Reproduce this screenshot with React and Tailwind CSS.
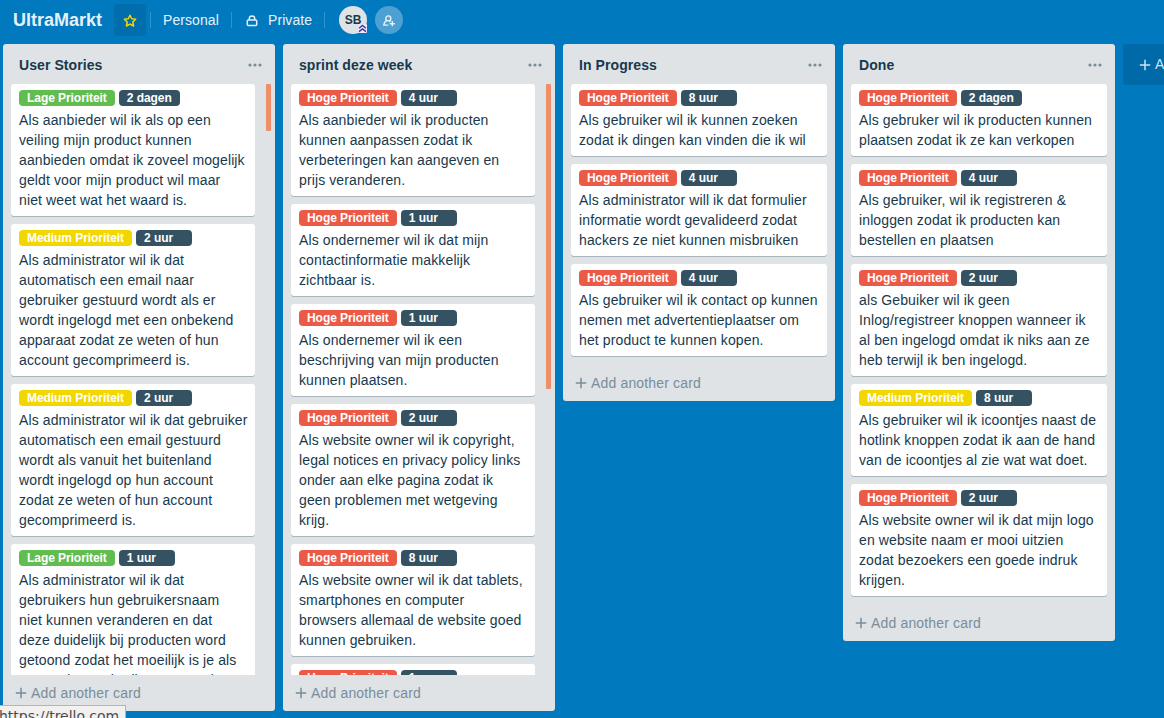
import React from "react";

const LOW = ["Lage Prioriteit", "bg-[#61bd4f]"];
const MEDIUM = ["Medium Prioriteit", "bg-[#f2d600]"];
const HIGH = ["Hoge Prioriteit", "bg-[#eb5a46]"];

const lists = [
  {
    title: "User Stories",
    thumb: "h-[47px]",
    cards: [
      [LOW, "2 dagen", ["Als aanbieder wil ik als op een", "veiling mijn product kunnen", "aanbieden omdat ik zoveel mogelijk", "geldt voor mijn product wil maar", "niet weet wat het waard is."]],
      [MEDIUM, "2 uur", ["Als administrator wil ik dat", "automatisch een email naar", "gebruiker gestuurd wordt als er", "wordt ingelogd met een onbekend", "apparaat zodat ze weten of hun", "account gecomprimeerd is."]],
      [MEDIUM, "2 uur", ["Als administrator wil ik dat gebruiker", "automatisch een email gestuurd", "wordt als vanuit het buitenland", "wordt ingelogd op hun account", "zodat ze weten of hun account", "gecomprimeerd is."]],
      [LOW, "1 uur", ["Als administrator wil ik dat", "gebruikers hun gebruikersnaam", "niet kunnen veranderen en dat", "deze duidelijk bij producten word", "getoond zodat het moeilijk is je als", "een andere gebruiker voor te doen"]],
    ],
  },
  {
    title: "sprint deze week",
    thumb: "h-[305px]",
    cards: [
      [HIGH, "4 uur", ["Als aanbieder wil ik producten", "kunnen aanpassen zodat ik", "verbeteringen kan aangeven en", "prijs veranderen."]],
      [HIGH, "1 uur", ["Als ondernemer wil ik dat mijn", "contactinformatie makkelijk", "zichtbaar is."]],
      [HIGH, "1 uur", ["Als ondernemer wil ik een", "beschrijving van mijn producten", "kunnen plaatsen."]],
      [HIGH, "2 uur", ["Als website owner wil ik copyright,", "legal notices en privacy policy links", "onder aan elke pagina zodat ik", "geen problemen met wetgeving", "krijg."]],
      [HIGH, "8 uur", ["Als website owner wil ik dat tablets,", "smartphones en computer", "browsers allemaal de website goed", "kunnen gebruiken."]],
      [HIGH, "1 uur", []],
    ],
  },
  {
    title: "In Progress",
    cards: [
      [HIGH, "8 uur", ["Als gebruiker wil ik kunnen zoeken", "zodat ik dingen kan vinden die ik wil"]],
      [HIGH, "4 uur", ["Als administrator will ik dat formulier", "informatie wordt gevalideerd zodat", "hackers ze niet kunnen misbruiken"]],
      [HIGH, "4 uur", ["Als gebruiker wil ik contact op kunnen", "nemen met advertentieplaatser om", "het product te kunnen kopen."]],
    ],
  },
  {
    title: "Done",
    cards: [
      [HIGH, "2 dagen", ["Als gebruker wil ik producten kunnen", "plaatsen zodat ik ze kan verkopen"]],
      [HIGH, "4 uur", ["Als gebruiker, wil ik registreren &", "inloggen zodat ik producten kan", "bestellen en plaatsen"]],
      [HIGH, "2 uur", ["als Gebuiker wil ik geen", "Inlog/registreer knoppen wanneer ik", "al ben ingelogd omdat ik niks aan ze", "heb terwijl ik ben ingelogd."]],
      [MEDIUM, "8 uur", ["Als gebruiker wil ik icoontjes naast de", "hotlink knoppen zodat ik aan de hand", "van de icoontjes al zie wat wat doet."]],
      [HIGH, "2 uur", ["Als website owner wil ik dat mijn logo", "en website naam er mooi uitzien", "zodat bezoekers een goede indruk", "krijgen."]],
    ],
  },
];

function Plus({ className = "" }) {
  return (
    <svg className={className} width="12" height="12" viewBox="0 0 12 12" fill="none" stroke="currentColor" strokeWidth="1.5">
      <path d="M6 .8v10.4M.8 6h10.4" />
    </svg>
  );
}

function Label({ color, children }) {
  return (
    <span className={`h-4 min-w-14 shrink-0 rounded-[4px] px-2 text-[12px] leading-4 font-bold tracking-[-0.06px] text-white ${color}`}>
      {children}
    </span>
  );
}

function Card({ card: [priority, time, lines] }) {
  return (
    <article className="shrink-0 rounded-[3px] bg-white px-2 py-1.5 shadow-[0_1px_0_rgba(9,45,66,0.25)]">
      <div className="mb-1 flex gap-1">
        <Label color={priority[1]}>{priority[0]}</Label>
        <Label color="bg-[#355263]">{time}</Label>
      </div>
      <p className="text-[14px] leading-5 tracking-[0.115px] whitespace-nowrap text-[#17394d]">
        {lines.map((line) => (
          <span key={line} className="block">{line}</span>
        ))}
      </p>
    </article>
  );
}

function List({ list }) {
  return (
    <section className="flex max-h-full w-[272px] shrink-0 flex-col rounded-[3px] bg-[#dfe3e6]">
      <header className="flex h-10 shrink-0 items-center justify-between pt-0.5 pr-[13px] pl-4">
        <h2 className="text-[14px] leading-5 font-bold tracking-[0.08px] text-[#17394d]">{list.title}</h2>
        <svg width="14" height="4" viewBox="0 0 14 4" className="mb-px fill-[#798d99]">
          <circle cx="2" cy="2" r="1.6" />
          <circle cx="7" cy="2" r="1.6" />
          <circle cx="12" cy="2" r="1.6" />
        </svg>
      </header>
      <div className="flex min-h-0 overflow-hidden pr-1 pl-2">
        <div className={`flex min-w-0 flex-1 flex-col gap-2 pb-[9px] ${list.thumb ? "" : "mr-1"}`}>
          {list.cards.map((card, i) => (
            <Card key={i} card={card} />
          ))}
        </div>
        {list.thumb && <div className={`ml-[11px] w-[5px] shrink-0 rounded-[1px] bg-[#ef8f68] ${list.thumb}`} />}
      </div>
      <button className="flex h-9 shrink-0 items-center gap-1 pl-3 text-[14px] leading-5 tracking-[0.16px] text-[#798d99]">
        <Plus />
        Add another card
      </button>
    </section>
  );
}

export default function App() {
  return (
    <div className="relative flex h-[718px] w-[1164px] flex-col overflow-hidden bg-[#0079bf] font-['Liberation_Sans',Arial,sans-serif]">
      <nav className="flex h-10 shrink-0 items-center pl-[13px] text-[14px] text-[#e5f1f8]">
        <h1 className="w-[101px] text-[18px] leading-8 font-bold">UltraMarkt</h1>
        <div className="flex h-8 w-8 items-center justify-center rounded-[3px] bg-[#006ead] text-[#f2d600]">
          <svg width="14" height="14" viewBox="0 0 14 14" fill="none" stroke="currentColor" strokeWidth="1.5" strokeLinejoin="round" className="mt-0.5">
            <path d="M7 1.2l1.7 3.6 4 .5-2.9 2.7.8 4L7 10.1 3.4 12l.8-4L1.3 5.3l4-.5z" />
          </svg>
        </div>
        <div className="ml-1 h-4 w-px bg-[#3394cc]" />
        <span className="ml-3 w-[68px] tracking-[0.08px]">Personal</span>
        <div className="h-4 w-px bg-[#3394cc]" />
        <svg width="12" height="12" viewBox="0 0 12 12" fill="none" stroke="currentColor" strokeWidth="1.5" className="mt-0.5 ml-3.5">
          <rect x="1.3" y="5" width="9.4" height="5.4" rx="1" />
          <path d="M3.3 5V3.6a2.7 2.7 0 0 1 5.4 0V5" />
        </svg>
        <span className="ml-2.5 w-[56px] tracking-[0.08px]">Private</span>
        <div className="h-4 w-px bg-[#3394cc]" />
        <div className="relative ml-3.5 flex size-7 items-center justify-center rounded-full bg-[#dfe3e6] text-[12px] font-bold text-[#17394d]">
          SB
          <svg width="9" height="9" viewBox="0 0 9 9" className="absolute right-0 bottom-px">
            <rect width="9" height="9" rx="1" fill="#eceafa" />
            <path d="M1 4.2l3.5-2.7L8 4.2M1 7.6l3.5-2.7L8 7.6" fill="none" stroke="#42389d" strokeWidth="1.4" />
          </svg>
        </div>
        <div className="ml-2 flex size-7 items-center justify-center rounded-full bg-[#4da1d2]">
          <svg width="14" height="14" viewBox="0 0 14 14" fill="none" stroke="currentColor" strokeWidth="1.4" className="mt-1">
            <circle cx="6.3" cy="3.4" r="2.5" />
            <path d="M4.6 5.4C3 6.3 2 7.8 1.8 10.1h4.4M7.3 6.2l1 .6M10.3 6.1v5.2M7.7 8.7h5.2" />
          </svg>
        </div>
      </nav>
      <main className="flex min-h-0 flex-1 items-start gap-2 pt-1 pb-[7px] pl-[3px]">
        {lists.map((list) => (
          <List key={list.title} list={list} />
        ))}
        <button className="flex h-[41px] w-[272px] shrink-0 items-center gap-1 rounded-[3px] bg-[#006aa8] pl-4 text-[14px] text-[#cce4f2]">
          <Plus />
          Add another list
        </button>
      </main>
      <div className="absolute top-[705px] left-0 h-[20px] w-[126px] overflow-hidden border border-l-0 border-[#b9b4af] bg-[#f2f1f0] font-['DejaVu_Sans',sans-serif] text-[14px] leading-[21px] whitespace-nowrap text-[#4c4c4c]">
        <span className="-ml-px">https://trello.com</span>
      </div>
    </div>
  );
}
